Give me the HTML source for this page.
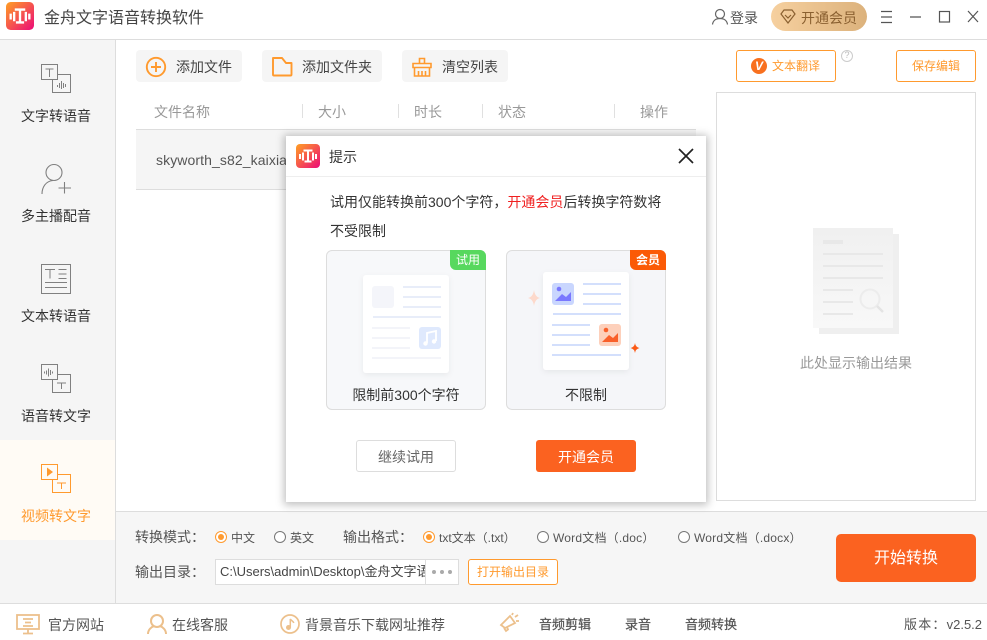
<!DOCTYPE html>
<html lang="zh"><head><meta charset="utf-8"><title>金舟文字语音转换软件</title>
<style>
html,body{margin:0;padding:0;background:#fff}
#p{position:relative;width:987px;height:640px;overflow:hidden;background:#fff;font-family:"Liberation Sans","Noto Sans CJK SC",sans-serif;font-size:14px;color:#333}
#p div,#p span,#p svg{position:absolute}
.t{white-space:nowrap;line-height:20px;height:20px}
.c{text-align:center}
.b{background:#f5f5f5;border-radius:4px}
.r{width:10px;height:10px;border:1px solid #777;border-radius:50%;background:#fff}
.ra{width:10px;height:10px;border:1px solid #ff9a2e;border-radius:50%;background:#fff}
.ra:after{content:"";position:absolute;left:2px;top:2px;width:6px;height:6px;border-radius:50%;background:#ff9a2e}
.s{font-size:13px;color:#555;-webkit-text-stroke:.25px #555}
.w{font-size:12px;color:#555;letter-spacing:.2px}
</style></head><body><div id="p">

<!-- title bar -->
<svg style="left:6px;top:2px" width="28" height="28" viewBox="0 0 24 24"><defs><linearGradient id="g1" x1="0" y1="0" x2="1" y2="1"><stop offset="0" stop-color="#ffa024"/><stop offset="1" stop-color="#ec0a78"/></linearGradient></defs><rect width="24" height="24" rx="4" fill="url(#g1)"/><path d="M7.500 6.500h9M12 6.500v11M8.500 17.500h7M4 10v5M7 8.500v8M17 8.500v8M20 10v5" stroke="#fff" stroke-width="2" fill="none"/></svg>
<div class="t" style="left:44px;top:9px;font-size:16px;color:#444">金舟文字语音转换软件</div>
<div style="left:0;top:39px;width:987px;height:1px;background:#ddd"></div>

<svg style="left:711px;top:8px" width="18" height="18" viewBox="0 0 18 18" fill="none" stroke="#666" stroke-width="1.200"><circle cx="9" cy="6" r="4.500"/><path d="M1.500 16.500c.5-4 3.500-6 7.500-6s7 2 7.500 6"/></svg>
<div class="t" style="left:730px;top:8px;color:#555">登录</div>
<div style="left:771px;top:2px;width:96px;height:29px;border-radius:15px;background:linear-gradient(90deg,#f6d09f,#dcb27c)"></div>
<svg style="left:780px;top:9px" width="16" height="15" viewBox="0 0 16 15" fill="none" stroke="#8a6030" stroke-width="1.200"><path d="M4 1h8l3 4-7 9-7-9zM5 6l3 3 3-3"/></svg>
<div class="t" style="left:801px;top:8px;color:#8a6030">开通会员</div>
<svg style="left:880px;top:9px" width="100" height="16" viewBox="0 0 100 16" fill="none" stroke="#555" stroke-width="1.200"><path d="M1 2.500h11M1 8h11M1 13.500h11M30 8h11"/><rect x="59.500" y="2.500" width="10" height="10.500"/><path d="M88 2l10 11M98 2L88 13"/></svg>

<!-- sidebar -->
<div style="left:0;top:40px;width:115px;height:563px;background:#f5f5f5"></div>
<div style="left:115px;top:40px;width:1px;height:563px;background:#ddd"></div>
<div style="left:0;top:440px;width:115px;height:100px;background:#fffbf5"></div>

<svg style="left:40px;top:63px" width="32" height="32" viewBox="0 0 32 32" fill="none" stroke="#808080"><rect x="1.500" y="1.500" width="16" height="15"/><path d="M17.500 11.500h13v18h-18v-13M5.500 6h8M9.500 6v8M17.500 22v2M19.500 20v5M21.500 18v8M23.500 20v5M25.500 21v3"/></svg>
<div class="t c" style="left:0;width:112px;top:106px;color:#333">文字转语音</div>

<svg style="left:40px;top:163px" width="32" height="34" viewBox="0 0 32 34" fill="none" stroke="#808080" stroke-width="1.100"><circle cx="14" cy="9.500" r="8"/><path d="M2 31c0-7 4-13 11-13.500M18.500 25h12.500M24.500 19v11.500"/></svg>
<div class="t c" style="left:0;width:112px;top:206px;color:#333">多主播配音</div>

<svg style="left:40px;top:263px" width="32" height="32" viewBox="0 0 32 32" fill="none" stroke="#808080"><rect x="1.500" y="1.500" width="29" height="29"/><path d="M5 6.500h10M10 6.500v9M18.500 6.500h8M18.500 11h8M18.500 15.500h8M5 19.500h22M5 24.500h22"/></svg>
<div class="t c" style="left:0;width:112px;top:306px;color:#333">文本转语音</div>

<svg style="left:40px;top:363px" width="32" height="32" viewBox="0 0 32 32" fill="none" stroke="#808080"><rect x="1.500" y="1.500" width="16" height="15"/><path d="M17.500 11.500h13v18h-18v-13M4.500 8.500v2M6.500 7.500v4M8.500 5.500v8M10.500 7v5M12.500 8.500v2M17 20h9M21.500 20v6"/></svg>
<div class="t c" style="left:0;width:112px;top:406px;color:#333">语音转文字</div>

<svg style="left:40px;top:463px" width="32" height="32" viewBox="0 0 32 32" fill="none" stroke="#ff9a2e"><rect x="1.500" y="1.500" width="16" height="15"/><path d="M17.500 11.500h13v18h-18v-13M17 20h9M21.500 20v6"/><path d="M7 4.500l6 4.500-6 4.500z" fill="#ff9a2e" stroke="none"/></svg>
<div class="t c" style="left:0;width:112px;top:506px;color:#ff9a2e">视频转文字</div>

<!-- toolbar -->
<div class="b" style="left:136px;top:50px;width:106px;height:32px"></div>
<svg style="left:145px;top:56px" width="22" height="22" viewBox="0 0 22 22" fill="none" stroke="#ff9a2e" stroke-width="1.900"><circle cx="11" cy="11" r="9.200"/><path d="M6 11h10M11 6v10"/></svg>
<div class="t" style="left:176px;top:57px;color:#444">添加文件</div>
<div class="b" style="left:262px;top:50px;width:120px;height:32px"></div>
<svg style="left:271px;top:56px" width="22" height="22" viewBox="0 0 22 22" fill="none" stroke="#ff9a2e" stroke-width="1.900"><path d="M2 2h9l4 5h5.500v11.500a1 1 0 0 1-1 1H3a1 1 0 0 1-1-1z" stroke-linejoin="round"/></svg>
<div class="t" style="left:302px;top:57px;color:#444">添加文件夹</div>
<div class="b" style="left:402px;top:50px;width:106px;height:32px"></div>
<svg style="left:411px;top:56px" width="22" height="22" viewBox="0 0 22 22" fill="none" stroke="#ff9a2e" stroke-width="1.600"><path d="M8.500 7V2.500h5V7M2 7.500h18v4H2zM3.500 11.500V20h15v-8.500M7.500 15v5M11 15v5M14.500 15v5"/></svg>
<div class="t" style="left:442px;top:57px;color:#444">清空列表</div>

<!-- table -->
<div class="t" style="left:154px;top:102px;color:#999">文件名称</div>
<div style="left:302px;top:104px;width:1px;height:14px;background:#e0e0e0"></div>
<div class="t" style="left:318px;top:102px;color:#999">大小</div>
<div style="left:398px;top:104px;width:1px;height:14px;background:#e0e0e0"></div>
<div class="t" style="left:414px;top:102px;color:#999">时长</div>
<div style="left:482px;top:104px;width:1px;height:14px;background:#e0e0e0"></div>
<div class="t" style="left:498px;top:102px;color:#999">状态</div>
<div style="left:614px;top:104px;width:1px;height:14px;background:#e0e0e0"></div>
<div class="t" style="left:640px;top:102px;color:#999">操作</div>
<div style="left:136px;top:129px;width:560px;height:59px;background:#f5f5f5;border-top:1px solid #ddd;border-bottom:1px solid #ddd"></div>
<div class="t" style="left:156px;top:150px;width:130px;overflow:hidden;font-size:14px;letter-spacing:.1px;color:#555">skyworth_s82_kaixia</div>

<!-- right -->
<div style="left:736px;top:50px;width:98px;height:30px;border:1px solid #ff9a2e;border-radius:3px;background:#fff"></div>
<div style="left:751px;top:58px;width:16px;height:16px;border-radius:50%;background:#f8701f"></div>
<div class="t c" style="left:751px;top:56px;width:16px;color:#fff;font-style:italic;font-weight:bold;font-size:12px">V</div>
<div class="t" style="left:772px;top:56px;color:#ff9a2e;font-size:12px">文本翻译</div>
<div style="left:841px;top:50px;width:10px;height:10px;border:1px solid #ccc;border-radius:50%"></div>
<div class="t c" style="left:841px;top:45px;width:12px;color:#bbb;font-size:9px">?</div>
<div style="left:896px;top:50px;width:78px;height:30px;border:1px solid #ff9a2e;border-radius:3px;background:#fff"></div>
<div class="t c" style="left:896px;top:56px;width:80px;color:#ff9a2e;font-size:12px">保存编辑</div>

<div style="left:716px;top:92px;width:258px;height:407px;border:1px solid #ddd;background:#fff"></div>
<svg style="left:812px;top:227px" width="88" height="108" viewBox="0 0 88 108"><defs><linearGradient id="g2" x1="0" y1="0" x2="0" y2="1"><stop offset="0" stop-color="#f0f0f0"/><stop offset="1" stop-color="#f8f8f8"/></linearGradient></defs><rect x="7" y="7" width="80" height="100" fill="#efefef"/><rect x="1" y="1" width="80" height="100" fill="url(#g2)"/><path d="M11 15h20" stroke="#e8e8e8" stroke-width="4"/><path d="M11 27h60M11 39h60M11 51h60M11 63h30M11 75h30M11 87h30" stroke="#e8e8e8" stroke-width="2"/><circle cx="58" cy="72" r="9.500" fill="none" stroke="#ececec" stroke-width="2"/><path d="M65 79l6 6" stroke="#e4e4e4" stroke-width="2.500"/></svg>
<div class="t" style="left:800px;top:353px;color:#999">此处显示输出结果</div>

<!-- bottom panel -->
<div style="left:116px;top:511px;width:871px;height:92px;background:#f6f6f6;border-top:1px solid #ddd;box-sizing:border-box"></div>
<div class="t" style="left:135px;top:527px;color:#555">转换模式：</div>
<div class="ra" style="left:215px;top:531px"></div><div class="t" style="left:231px;top:528px;font-size:12px;color:#555">中文</div>
<div class="r" style="left:274px;top:531px"></div><div class="t" style="left:290px;top:528px;font-size:12px;color:#555">英文</div>
<div class="t" style="left:343px;top:527px;color:#555">输出格式：</div>
<div class="ra" style="left:423px;top:531px"></div><div class="t w" style="left:439px;top:528px;letter-spacing:0">txt文本（.txt）</div>
<div class="r" style="left:537px;top:531px"></div><div class="t w" style="left:553px;top:528px">Word文档（.doc）</div>
<div class="r" style="left:678px;top:531px"></div><div class="t w" style="left:694px;top:528px">Word文档（.docx）</div>

<div class="t" style="left:135px;top:562px;color:#555">输出目录：</div>
<div style="left:215px;top:559px;width:242px;height:24px;border:1px solid #ddd;background:#fff"></div>
<div class="t" style="left:220px;top:562px;width:205px;overflow:hidden;font-size:13px;color:#444">C:\Users\admin\Desktop\金舟文字语音</div>
<div style="left:425px;top:559px;width:34px;height:26px;border:1px solid #ddd;background:#fff;box-sizing:border-box"></div>
<div style="left:432px;top:570px;width:4px;height:4px;border-radius:50%;background:#aaa"></div>
<div style="left:440px;top:570px;width:4px;height:4px;border-radius:50%;background:#aaa"></div>
<div style="left:448px;top:570px;width:4px;height:4px;border-radius:50%;background:#aaa"></div>
<div style="left:468px;top:559px;width:88px;height:24px;border:1px solid #ff9a2e;border-radius:3px;background:#fff"></div>
<div class="t c" style="left:468px;top:562px;width:90px;font-size:12px;color:#ff9a2e">打开输出目录</div>
<div class="c" style="left:836px;top:534px;width:140px;height:48px;line-height:50px;background:#fb6220;border-radius:5px;color:#fff;font-size:16px">开始转换</div>

<!-- footer -->
<div style="left:0;top:603px;width:987px;height:1px;background:#ddd"></div>
<svg style="left:16px;top:613px" width="25" height="22" viewBox="0 0 25 22" fill="none" stroke="#ecc08c" stroke-width="1.800"><rect x="1" y="2" width="22" height="14"/><path d="M7 6h10M9 9.500h6M7 13h10M7 20.500h10M12 16v4"/></svg>
<div class="t" style="left:48px;top:615px;color:#555">官方网站</div>
<svg style="left:147px;top:613px" width="20" height="22" viewBox="0 0 20 22" fill="none" stroke="#ecc08c" stroke-width="2"><circle cx="10" cy="8" r="6"/><path d="M1 21c0-4 3-7 6-8M19 21c0-4-3-7-6-8"/></svg>
<div class="t" style="left:172px;top:615px;color:#555">在线客服</div>
<svg style="left:280px;top:614px" width="20" height="20" viewBox="0 0 20 20"><circle cx="10" cy="10" r="9" fill="none" stroke="#ecc08c" stroke-width="1.700"/><circle cx="8.500" cy="13.500" r="2.500" fill="#ecc08c"/><path d="M10.300 13.500V5c1 2 3 2 3.500 4" fill="none" stroke="#ecc08c" stroke-width="1.500"/></svg>
<div class="t" style="left:305px;top:615px;color:#555">背景音乐下载网址推荐</div>
<svg style="left:499px;top:612px" width="22" height="22" viewBox="0 0 22 22" fill="none" stroke="#ecc08c" stroke-width="1.800"><path d="M2 13l9-9 5 7-10 5zM5 16l2 3 2-1.500-1-2.500M13 3l1-2M16 5l3-2M17 9l3 0"/></svg>
<div class="t s" style="left:539px;top:615px">音频剪辑</div>
<div class="t s" style="left:625px;top:615px">录音</div>
<div class="t s" style="left:685px;top:615px">音频转换</div>
<div class="t" style="left:904px;top:615px;font-size:13px;color:#555"><span style="position:static;letter-spacing:1.200px">版本：</span>v2.5.2</div>

<!-- dialog -->
<div style="left:286px;top:136px;width:420px;height:366px;background:#fff;box-shadow:0 1px 8px 2px rgba(0,0,0,.25)"></div>
<svg style="left:296px;top:144px" width="24" height="24" viewBox="0 0 24 24"><rect width="24" height="24" rx="4" fill="url(#g1)"/><path d="M7.500 6.500h9M12 6.500v11M8.500 17.500h7M4 10v5M7 8.500v8M17 8.500v8M20 10v5" stroke="#fff" stroke-width="2" fill="none"/></svg>
<div class="t" style="left:329px;top:147px;color:#333">提示</div>
<svg style="left:678px;top:148px" width="16" height="16" viewBox="0 0 16 16" fill="none" stroke="#222" stroke-width="1.700"><path d="M1 1l14 14M15 1L1 15"/></svg>
<div style="left:286px;top:176px;width:420px;height:1px;background:#eee"></div>
<div class="t" style="left:330px;top:192px;color:#333">试用仅能转换前300个字符，<span style="position:static;color:#f02020">开通会员</span>后转换字符数将</div>
<div class="t" style="left:330px;top:221px;color:#333">不受限制</div>

<!-- card 1 -->
<div style="left:326px;top:250px;width:158px;height:158px;border:1px solid #ddd;border-radius:6px;background:#f7f8fa"></div>
<div class="c" style="left:450px;top:250px;width:36px;height:20px;line-height:20px;background:#57d85e;border-radius:0 6px 0 6px;color:#fff;font-size:12px">试用</div>
<svg style="left:353px;top:265px" width="106" height="115" viewBox="0 0 106 115"><defs><filter id="s" x="-20%" y="-20%" width="140%" height="140%"><feDropShadow dx="0" dy="2" stdDeviation="3" flood-color="#000" flood-opacity=".06"/></filter></defs><rect x="10" y="10" width="86" height="98" rx="3" fill="#fff" filter="url(#s)"/><rect x="19" y="21" width="22" height="22" rx="3" fill="#f4f5fa"/><path d="M50 22h38M50 32h38M50 42h38M20 52h68" stroke="#e8edf9" stroke-width="2"/><path d="M19 63h38M19 73h38M19 83h38M19 93h69" stroke="#f3f4f9" stroke-width="2"/><rect x="66" y="62" width="22" height="22" rx="3" fill="#dfe9fd"/><path d="M74 78V68l9-2v10" fill="none" stroke="#fff" stroke-width="1.800"/><circle cx="72.500" cy="78.500" r="2.200" fill="#fff"/><circle cx="81" cy="76.500" r="2.200" fill="#fff"/></svg>
<div class="t c" style="left:326px;top:385px;width:160px;color:#333">限制前300个字符</div>

<!-- card 2 -->
<div style="left:506px;top:250px;width:158px;height:158px;border:1px solid #ddd;border-radius:6px;background:#f5f6f9"></div>
<div class="c" style="left:630px;top:250px;width:36px;height:20px;line-height:20px;background:#fb5a06;border-radius:0 6px 0 6px;color:#fff;font-size:12px;font-weight:bold">会员</div>
<svg style="left:523px;top:262px" width="125" height="115" viewBox="0 0 125 115"><rect x="20" y="10" width="86" height="98" rx="3" fill="#fff" filter="url(#s)"/><rect x="29" y="21" width="22" height="22" rx="3" fill="#c9d6fe"/><circle cx="36" cy="27" r="2.300" fill="#7a78ff"/><path d="M32 39l7-7 4 3 5-5v9z" fill="#7a78ff"/><path d="M60 22h38M60 32h38M60 42h38M30 52h68M29 63h38M29 73h38M29 83h38M29 93h69" stroke="#d3dffc" stroke-width="2"/><rect x="76" y="62" width="22" height="22" rx="3" fill="#fdd0bb"/><circle cx="83" cy="68" r="2.300" fill="#f9602a"/><path d="M79 80l7-7 4 3 5-5v9z" fill="#f9602a"/><path d="M11 28q1 7 6 8q-5 1-6 8q-1-7-6-8q5-1 6-8z" fill="#fdd9cb"/><path d="M112 81q.5 4 4.500 5q-4 1-4.500 5q-.5-4-4.500-5q4-1 4.500-5z" fill="#fb5a16"/></svg>
<div class="t c" style="left:506px;top:385px;width:160px;color:#333">不限制</div>

<div class="c" style="left:356px;top:440px;width:98px;height:30px;line-height:33px;border:1px solid #ddd;border-radius:3px;color:#666;font-size:14px">继续试用</div>
<div class="c" style="left:536px;top:440px;width:100px;height:32px;line-height:35px;background:#fb6220;border-radius:3px;color:#fff;font-size:14px">开通会员</div>

</div></body></html>
